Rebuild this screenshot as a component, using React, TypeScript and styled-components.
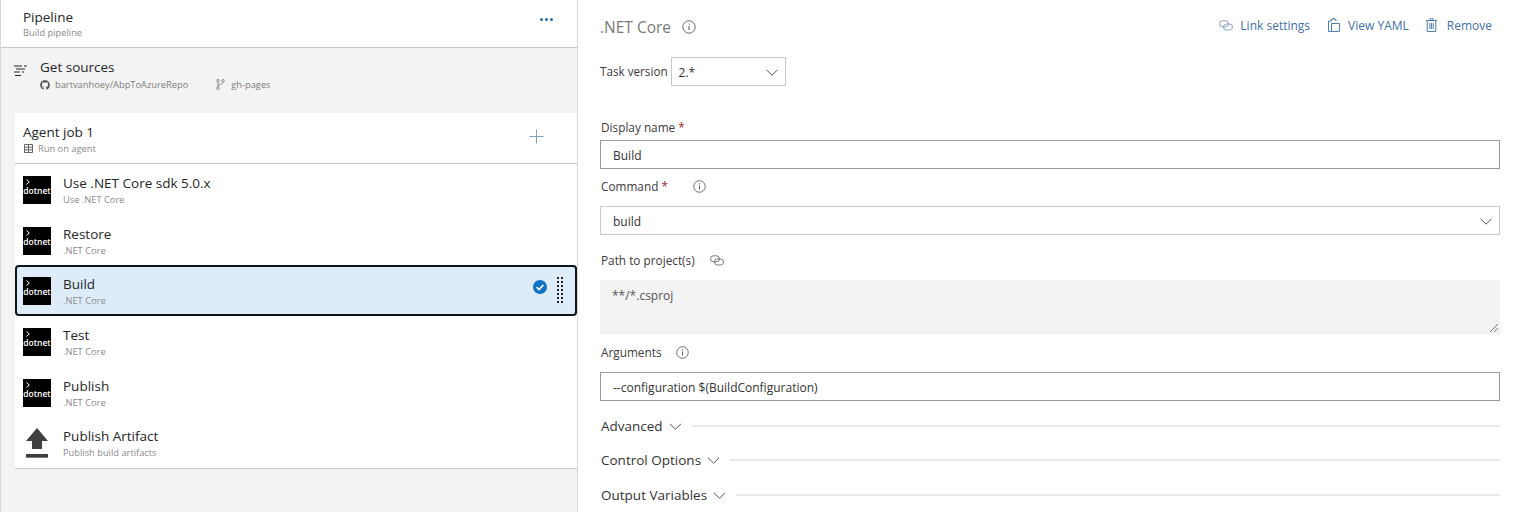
import styled, { createGlobalStyle } from "styled-components";
import { FaGithub } from "react-icons/fa";

const GlobalStyle = createGlobalStyle`
  html, body {
    margin: 0;
    padding: 0;
    background: #fff;
    overflow: hidden;
  }
  body {
    font-family: "Open Sans", "Liberation Sans", sans-serif;
    color: #2b2b2b;
  }
  * {
    box-sizing: border-box;
  }
`;

const Page = styled.div`
  display: flex;
  width: 1519px;
  height: 512px;
  overflow: hidden;
`;

const LeftPanel = styled.aside`
  width: 578px;
  flex-shrink: 0;
  background: #f3f3f3;
  border-left: 1px solid #d8d8d8;
  border-right: 1px solid #d8d8d8;
`;

const PipelineHeader = styled.header`
  height: 48px;
  background: #fff;
  border-bottom: 1px solid #c8c8c8;
  display: flex;
  align-items: flex-start;
  justify-content: space-between;
  padding: 8px 24px 0 22px;
`;

const Title = styled.div`
  font-size: 13.5px;
  line-height: 18px;
  color: #262626;
  white-space: nowrap;
`;

const SubTitle = styled.div`
  font-size: 9.3px;
  line-height: 13px;
  color: #8a8a8a;
  white-space: nowrap;
  display: flex;
  align-items: center;
`;

const Dots = styled.div`
  display: flex;
  gap: 2px;
  margin-top: 10px;

  span {
    width: 3px;
    height: 3px;
    border-radius: 50%;
    background: #1f6fb0;
  }
`;

const Sources = styled.section`
  height: 65px;
  display: flex;
  padding: 10px 0 0 13px;
  gap: 13px;
`;

const SourceIcon = styled.svg`
  width: 13px;
  height: 12px;
  margin-top: 7px;
  flex-shrink: 0;
`;

const SourceMeta = styled(SubTitle)`
  margin-top: 2px;
  color: #7d7d7d;
  svg {
    flex-shrink: 0;
  }
`;

const MetaText = styled.span<{ $left: number }>`
  margin-left: ${(p) => p.$left}px;
`;

const AgentJob = styled.section`
  margin-left: 14px;
  height: 51px;
  background: #fff;
  border-bottom: 1px solid #c8c8c8;
  display: flex;
  justify-content: space-between;
  padding: 10px 33px 0 8px;
`;

const AgentMeta = styled(SubTitle)`
  margin-top: 1px;
  padding-left: 1px;
`;

const PlusIcon = styled.svg`
  width: 15px;
  height: 15px;
  margin-top: 6px;
`;

const TaskList = styled.div`
  margin-left: 14px;
  height: 305px;
  background: #fff;
  border-bottom: 1px solid #c8c8c8;
`;

const TaskRow = styled.div<{ $selected?: boolean }>`
  height: 50.667px;
  display: flex;
  align-items: flex-start;
  padding: 12px 0 0 8px;
  position: relative;
  background: ${(p) => (p.$selected ? "#deecf9" : "#fff")};
  border-radius: ${(p) => (p.$selected ? "4px" : "0")};
  box-shadow: ${(p) => (p.$selected ? "inset 0 0 0 2px #10151b" : "none")};
`;

const DotnetIcon = styled.div`
  width: 28px;
  height: 28px;
  flex-shrink: 0;
  background: #000;
  color: #fff;
  position: relative;
  font-size: 8.5px;
  font-weight: 600;
  line-height: 10px;
  text-align: center;
  white-space: nowrap;
  padding-top: 10px;
`;

const Prompt = styled.svg`
  position: absolute;
  top: 3px;
  left: 3px;
  width: 4px;
  height: 6px;
`;

const ArtifactIcon = styled.svg`
  width: 28px;
  height: 31px;
  flex-shrink: 0;
  margin-top: -2px;
`;

const TaskText = styled.div`
  margin-left: 12px;
  margin-top: -2px;

  ${SubTitle} {
    margin-top: 1px;
  }
`;

const TaskActions = styled.div`
  position: absolute;
  right: 14px;
  top: 12px;
  display: flex;
  align-items: flex-start;
  gap: 10px;

  svg {
    margin-top: 3px;
  }
`;

const Gripper = styled.div`
  display: grid;
  grid-template-columns: repeat(2, 2px);
  grid-auto-rows: 2px;
  gap: 2px;

  span {
    background: #222;
  }
`;

const RightPanel = styled.main`
  flex: 1;
  padding: 0 19px 0 22px;
  min-width: 0;
`;

const TitleBar = styled.div`
  height: 57px;
  padding-bottom: 4px;
  display: flex;
  align-items: center;
  justify-content: space-between;
`;

const TaskTitle = styled.h1`
  margin: 0;
  font-size: 15.5px;
  font-weight: 400;
  color: #7a7a7a;
  display: flex;
  align-items: center;
  gap: 11px;
`;

const Actions = styled.div`
  display: flex;
  align-items: center;
  padding-right: 8px;
  padding-bottom: 3px;
`;

const ActionLink = styled.a<{ $left: number; $gap: number }>`
  display: flex;
  align-items: center;
  gap: ${(p) => p.$gap}px;
  margin-left: ${(p) => p.$left}px;
  font-size: 12px;
  color: #3f70a8;
  white-space: nowrap;
`;

const LineIcon = styled.svg<{ $w: number; $h: number }>`
  width: ${(p) => p.$w}px;
  height: ${(p) => p.$h}px;
  flex-shrink: 0;
  fill: none;
`;

const VersionRow = styled.div`
  display: flex;
  align-items: center;
  gap: 3px;
  font-size: 11.7px;
  color: #3c3c3c;
`;

const VersionLabel = styled.span`
  padding-bottom: 2px;
`;

const SelectBox = styled.div<{ $width?: string; $dark?: boolean }>`
  width: ${(p) => p.$width ?? "100%"};
  height: 29px;
  border: 1px solid ${(p) => (p.$dark ? "#9a9a9a" : "#c8c8c8")};
  display: flex;
  align-items: center;
  justify-content: space-between;
  padding: 1px 7px 0 12px;
  font-size: 12px;
  color: #333;
`;

const VersionSelect = styled(SelectBox)`
  padding-left: 7px;
`;

const Field = styled.div<{ $top: number }>`
  margin-top: ${(p) => p.$top}px;
`;

const Label = styled.div<{ $gap: number; $iconGap?: number }>`
  height: 18px;
  margin-bottom: ${(p) => p.$gap}px;
  font-size: 11.8px;
  line-height: 18px;
  color: #3c3c3c;
  padding-left: 1px;
  display: flex;
  align-items: center;
  gap: ${(p) => p.$iconGap ?? 0}px;
`;

const Required = styled.span`
  color: #a4262c;
  margin-left: 3px;
`;

const TextArea = styled.div`
  height: 54px;
  background: #f3f3f3;
  padding: 7px 12px;
  font-size: 12px;
  line-height: 17px;
  color: #555;
  position: relative;
`;

const Resizer = styled.svg`
  position: absolute;
  right: 1px;
  bottom: 1px;
  width: 10px;
  height: 10px;
`;

const Section = styled.div<{ $top: number }>`
  margin-top: ${(p) => p.$top}px;
  height: 20px;
  display: flex;
  align-items: center;
  font-size: 13.5px;
  color: #333;
  padding-left: 1px;
  white-space: nowrap;
`;

const SectionChevron = styled(LineIcon)`
  margin-left: 6px;
  margin-right: 10px;
`;

const SectionRule = styled.div`
  flex: 1;
  height: 2px;
  background: #e8e8e8;
`;

const InfoIcon = ({ size = 13 }: { size?: number }) => (
  <LineIcon $w={size} $h={size} viewBox="0 0 14 14">
    <circle cx="7" cy="7" r="6.2" stroke="#555" strokeWidth="0.9" />
    <path d="M7 6v4.2" stroke="#555" strokeWidth="1" />
    <circle cx="7" cy="4.1" r="0.7" fill="#555" />
  </LineIcon>
);

const LinkIcon = ({ color }: { color: string }) => (
  <LineIcon $w={14} $h={11} viewBox="0 0 14 11">
    <rect x="0.5" y="0.8" width="9" height="6" rx="3" stroke={color} strokeWidth="0.9" />
    <rect x="4.5" y="4" width="9" height="6" rx="3" stroke={color} strokeWidth="0.9" />
  </LineIcon>
);

const Chevron = () => (
  <LineIcon $w={12} $h={7} viewBox="0 0 12 7">
    <path d="M0.5 0.8 6 6.2 11.5 0.8" stroke="#555" strokeWidth="1" />
  </LineIcon>
);

const TaskIcon = ({ kind }: { kind: "dotnet" | "artifact" }) =>
  kind === "dotnet" ? (
    <DotnetIcon>
      <Prompt viewBox="0 0 4 6">
        <path d="M0.5 0.5 3.3 3 0.5 5.5" stroke="#fff" strokeWidth="1" fill="none" />
      </Prompt>
      dotnet
    </DotnetIcon>
  ) : (
    <ArtifactIcon viewBox="0 0 28 31">
      <path d="M14 1 25 14H19V22H9V14H3Z" fill="#3f3f3f" />
      <rect x="3" y="27" width="22" height="3.7" fill="#3f3f3f" />
    </ArtifactIcon>
  );

type Task = {
  name: string;
  type: string;
  kind: "dotnet" | "artifact";
  selected?: boolean;
};

const tasks: Task[] = [
  { name: "Use .NET Core sdk 5.0.x", type: "Use .NET Core", kind: "dotnet" },
  { name: "Restore", type: ".NET Core", kind: "dotnet" },
  { name: "Build", type: ".NET Core", kind: "dotnet", selected: true },
  { name: "Test", type: ".NET Core", kind: "dotnet" },
  { name: "Publish", type: ".NET Core", kind: "dotnet" },
  { name: "Publish Artifact", type: "Publish build artifacts", kind: "artifact" },
];

const SectionHeader = ({ label, top }: { label: string; top: number }) => (
  <Section $top={top}>
    {label}
    <SectionChevron $w={13} $h={7} viewBox="0 0 12 7">
      <path d="M0.5 0.8 6 6.2 11.5 0.8" stroke="#555" strokeWidth="1" />
    </SectionChevron>
    <SectionRule />
  </Section>
);

const App = () => {
  return (
    <Page>
      <GlobalStyle />
      <LeftPanel>
        <PipelineHeader>
          <div>
            <Title>Pipeline</Title>
            <SubTitle>Build pipeline</SubTitle>
          </div>
          <Dots>
            <span />
            <span />
            <span />
          </Dots>
        </PipelineHeader>

        <Sources>
          <SourceIcon viewBox="0 0 13 12">
            <path
              d="M0 1h8M10 1h3M2 4h9M0 7h6M8 7h2M1 10.5h6"
              stroke="#222"
              strokeWidth="1"
              fill="none"
            />
          </SourceIcon>
          <div>
            <Title>Get sources</Title>
            <SourceMeta>
              <FaGithub size={10} color="#555" />
              <MetaText $left={5}>bartvanhoey/AbpToAzureRepo</MetaText>
              <LineIcon $w={9} $h={11} viewBox="0 0 9 11" style={{ marginLeft: 28 }}>
                <circle cx="2" cy="1.8" r="1.3" stroke="#777" strokeWidth="0.8" />
                <circle cx="2" cy="9.2" r="1.3" stroke="#777" strokeWidth="0.8" />
                <circle cx="7" cy="1.8" r="1.3" stroke="#777" strokeWidth="0.8" />
                <path d="M2 3.1v4.8M7 3.1c0 2.6-5 1.6-5 4" stroke="#777" strokeWidth="0.8" />
              </LineIcon>
              <MetaText $left={6}>gh-pages</MetaText>
            </SourceMeta>
          </div>
        </Sources>

        <AgentJob>
          <div>
            <Title>Agent job 1</Title>
            <AgentMeta>
              <LineIcon $w={9} $h={9} viewBox="0 0 9 9">
                <path
                  d="M0.5 0.5h8v8h-8zM0.5 3.2h8M0.5 5.8h8M4.5 0.5v8"
                  stroke="#666"
                  strokeWidth="1"
                />
              </LineIcon>
              <MetaText $left={5}>Run on agent</MetaText>
            </AgentMeta>
          </div>
          <PlusIcon viewBox="0 0 15 15">
            <path d="M7.5 0.5v14M0.5 7.5h14" stroke="#7ea3c2" strokeWidth="1" fill="none" />
          </PlusIcon>
        </AgentJob>

        <TaskList>
          {tasks.map((task) => (
            <TaskRow key={task.name} $selected={task.selected}>
              <TaskIcon kind={task.kind} />
              <TaskText>
                <Title>{task.name}</Title>
                <SubTitle>{task.type}</SubTitle>
              </TaskText>
              {task.selected && (
                <TaskActions>
                  <svg width="14" height="14" viewBox="0 0 14 14">
                    <circle cx="7" cy="7" r="7" fill="#0f72c4" />
                    <path d="M3.6 7.2 6 9.6 10.4 5" stroke="#fff" strokeWidth="1.7" fill="none" />
                  </svg>
                  <Gripper>
                    {Array.from({ length: 14 }, (_, i) => (
                      <span key={i} />
                    ))}
                  </Gripper>
                </TaskActions>
              )}
            </TaskRow>
          ))}
        </TaskList>
      </LeftPanel>

      <RightPanel>
        <TitleBar>
          <TaskTitle>
            .NET Core
            <InfoIcon size={14} />
          </TaskTitle>
          <Actions>
            <ActionLink $left={0} $gap={7}>
              <LinkIcon color="#7d97b8" />
              Link settings
            </ActionLink>
            <ActionLink $left={18} $gap={8}>
              <LineIcon $w={12} $h={14} viewBox="0 0 12 14">
                <path
                  d="M3.5 3H0.5v10.5h3M3.5 5.5h8v8h-8zM3 3V1.5h1.5V0.5h2v1H8V3"
                  stroke="#3f70a8"
                  strokeWidth="0.9"
                />
              </LineIcon>
              View YAML
            </ActionLink>
            <ActionLink $left={17} $gap={10}>
              <LineIcon $w={11} $h={14} viewBox="0 0 11 14">
                <path
                  d="M0 2.5h11M4 2.5V0.7h3v1.8M1.2 2.5v11h8.6v-11M3.8 5v6M5.5 5v6M7.2 5v6"
                  stroke="#3f70a8"
                  strokeWidth="0.9"
                />
              </LineIcon>
              Remove
            </ActionLink>
          </Actions>
        </TitleBar>

        <VersionRow>
          <VersionLabel>Task version</VersionLabel>
          <VersionSelect $width="115px">
            2.*
            <Chevron />
          </VersionSelect>
        </VersionRow>

        <Field $top={32}>
          <Label $gap={4}>
            Display name<Required>*</Required>
          </Label>
          <SelectBox $dark>Build</SelectBox>
        </Field>

        <Field $top={8}>
          <Label $gap={11} $iconGap={25}>
            <span>
              Command<Required>*</Required>
            </span>
            <InfoIcon />
          </Label>
          <SelectBox>
            build
            <Chevron />
          </SelectBox>
        </Field>

        <Field $top={16}>
          <Label $gap={11} $iconGap={15}>
            Path to project(s)
            <LinkIcon color="#666" />
          </Label>
          <TextArea>
            **/*.csproj
            <Resizer viewBox="0 0 10 10">
              <path d="M1 9 9 1M5 9 9 5" stroke="#555" strokeWidth="0.8" fill="none" />
            </Resizer>
          </TextArea>
        </Field>

        <Field $top={9}>
          <Label $gap={11} $iconGap={14}>
            Arguments
            <InfoIcon />
          </Label>
          <SelectBox $dark>--configuration $(BuildConfiguration)</SelectBox>
        </Field>

        <SectionHeader label="Advanced" top={15} />
        <SectionHeader label="Control Options" top={14} />
        <SectionHeader label="Output Variables" top={15} />
      </RightPanel>
    </Page>
  );
};

export default App;
